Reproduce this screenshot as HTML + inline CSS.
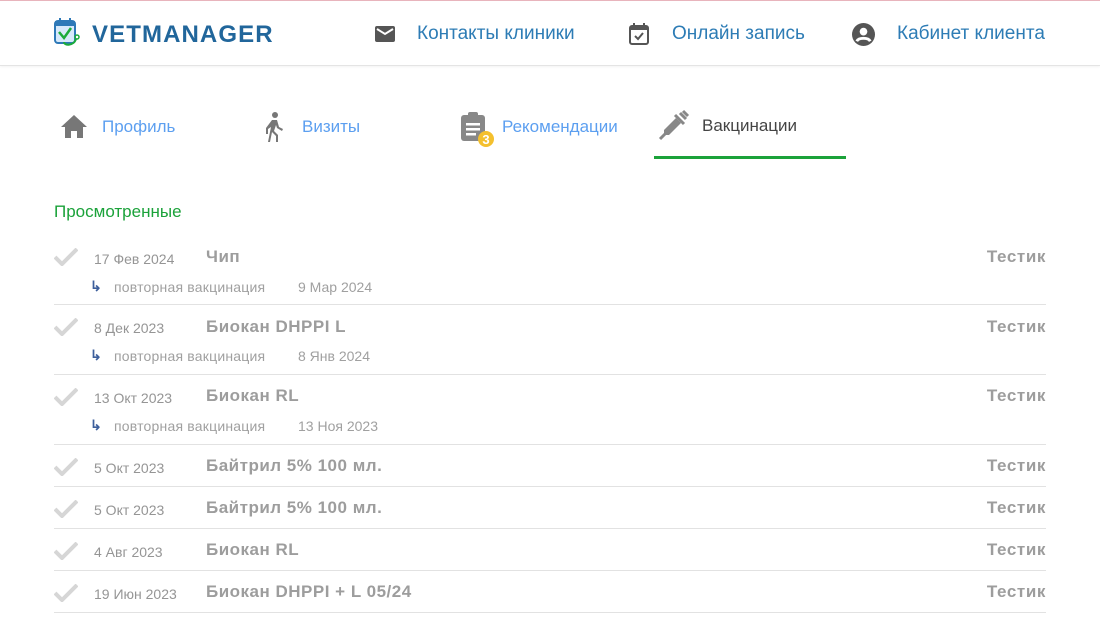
<!DOCTYPE html>
<html><head><meta charset="utf-8"><style>
*{margin:0;padding:0;box-sizing:border-box}
body{width:1100px;height:618px;overflow:hidden;background:#fff;font-family:"Liberation Sans",sans-serif;position:relative}
.top{position:absolute;left:0;top:0;width:1100px;height:1px;background:#e8b4bc}
.hdr{position:absolute;left:0;top:1px;width:1100px;height:65px;border-bottom:1px solid #e4e4e4;box-shadow:0 1px 2px rgba(0,0,0,.05)}
.logo{position:absolute;left:92px;top:20px;font-size:24px;font-weight:bold;color:#21669b;letter-spacing:1.1px}
.hl{position:absolute;top:22px;font-size:19px;color:#2d7cb5}
.tab{position:absolute;top:117px;font-size:17px;color:#5c9ff0}
.sec{position:absolute;left:54px;top:202px;font-size:17px;color:#1ba23a}
.row{position:absolute;left:54px;width:992px;border-bottom:1px solid #e2e2e2}
.chk{position:absolute;left:0;top:13px}
.d{position:absolute;left:40px;font-size:14px;color:#959595}
.t{position:absolute;left:152px;font-size:17px;font-weight:bold;color:#9d9d9d;letter-spacing:0.5px}
.o{position:absolute;right:0;font-size:17px;font-weight:bold;color:#9d9d9d;letter-spacing:0.6px}
.s{position:absolute;left:60px;font-size:14px;color:#a0a0a0;letter-spacing:0.2px}
.s2{position:absolute;left:244px;font-size:14px;color:#a0a0a0}
.ar{position:absolute;left:36px;font-size:14px;color:#3d5f9c;font-weight:bold}
</style></head><body>
<div class="top"></div>
<div class="hdr">
<svg style="position:absolute;left:53px;top:15px" width="34" height="34" viewBox="0 0 34 34"><rect x="2" y="5" width="20" height="22" rx="3" fill="#d7e9fb" stroke="#2e79b8" stroke-width="2"/><rect x="2" y="5" width="20" height="5" fill="#2e79b8"/><rect x="6" y="2" width="2" height="5" fill="#2e79b8"/><rect x="16" y="2" width="2" height="5" fill="#2e79b8"/><path d="M6 16l5 6 7-10" stroke="#1bab3b" stroke-width="2.5" fill="none"/><path d="M11 26c0 4 10 4 12-3" stroke="#1bab3b" stroke-width="2" fill="none"/><circle cx="24" cy="21" r="2" fill="none" stroke="#1bab3b" stroke-width="1.5"/></svg>
<div class="logo">VETMANAGER</div>
<svg style="position:absolute;left:375px;top:25px" width="20" height="16" viewBox="0 0 20 16"><rect width="20" height="16" rx="2" fill="#555"/><path d="M2 3l8 5 8-5" stroke="#fff" stroke-width="2" fill="none"/></svg>
<div class="hl" style="left:417px">Контакты клиники</div>
<svg style="position:absolute;left:629px;top:22px" width="20" height="22" viewBox="0 0 20 22"><rect x="1" y="3" width="18" height="18" rx="2" fill="none" stroke="#555" stroke-width="2"/><rect x="1" y="3" width="18" height="4" fill="#555"/><rect x="4" y="0" width="2" height="4" fill="#555"/><rect x="14" y="0" width="2" height="4" fill="#555"/><path d="M6 13l3 3 5-6" stroke="#555" stroke-width="2" fill="none"/></svg>
<div class="hl" style="left:672px">Онлайн запись</div>
<svg style="position:absolute;left:852px;top:22px" width="23" height="23" viewBox="0 0 24 24"><circle cx="12" cy="12" r="12" fill="#555"/><circle cx="12" cy="9" r="4" fill="#fff"/><path d="M5 19c2-4 12-4 14 0" stroke="#fff" stroke-width="3" fill="none"/></svg>
<div class="hl" style="left:897px">Кабинет клиента</div>
</div>
<svg style="position:absolute;left:61px;top:115px" width="26" height="23" viewBox="0 0 26 23"><path d="M13 0L0 12h4v11h6v-7h6v7h6V12h4z" fill="#777"/></svg>
<div class="tab" style="left:102px">Профиль</div>
<svg style="position:absolute;left:263px;top:112px" width="22" height="30" viewBox="0 0 22 30"><circle cx="12" cy="3" r="3" fill="#777"/><path d="M9 8h5l2 7 4 2-1 2-5-3-1-3-2 6 4 4v7h-2v-6l-4-4-2 10H5l3-15-3 2v5H3v-6z" fill="#777"/></svg>
<div class="tab" style="left:302px">Визиты</div>
<svg style="position:absolute;left:460px;top:112px" width="34" height="36" viewBox="0 0 34 36"><rect x="1" y="3" width="24" height="26" rx="3" fill="#888"/><rect x="8" y="0" width="10" height="6" rx="2" fill="#888"/><rect x="6" y="11" width="14" height="2.5" fill="#fff"/><rect x="6" y="16" width="14" height="2.5" fill="#fff"/><rect x="6" y="21" width="10" height="2.5" fill="#fff"/><circle cx="26" cy="27" r="8" fill="#f4c02e"/><text x="26" y="32" font-size="13" font-weight="bold" fill="#fff" text-anchor="middle" font-family="Liberation Sans">3</text></svg>
<div class="tab" style="left:502px">Рекомендации</div>
<svg style="position:absolute;left:658px;top:109px" width="32" height="32" viewBox="0 0 32 32"><path d="M2 30l5-5" stroke="#888" stroke-width="3"/><path d="M6 21l12-12 5 5-12 12-5 0z" fill="#888"/><path d="M17 6l9 9M22 4l6 6M25 2l5 5" stroke="#888" stroke-width="3"/></svg>
<div class="tab" style="left:702px;top:116px;color:#444">Вакцинации</div>
<div style="position:absolute;left:654px;top:156px;width:192px;height:3px;background:#1ba23a"></div>
<div class="sec">Просмотренные</div>

<svg width="0" height="0" style="position:absolute"><defs><symbol id="c" viewBox="0 0 24 18"><path d="M1 9l7 7L23 1" stroke="#d6d6d6" stroke-width="4" fill="none"/></symbol></defs></svg>

<div class="row" style="top:235px;height:70px"><svg class="chk" width="24" height="18"><use href="#c"/></svg><div class="d" style="top:16px">17 Фев 2024</div><div class="t" style="top:12px">Чип</div><div class="o" style="top:12px">Тестик</div><div class="ar" style="top:43px">↳</div><div class="s" style="top:44px">повторная вакцинация</div><div class="s2" style="top:44px">9 Мар 2024</div></div>
<div class="row" style="top:305px;height:70px"><svg class="chk" width="24" height="18"><use href="#c"/></svg><div class="d" style="top:15px">8 Дек 2023</div><div class="t" style="top:12px">Биокан DHPPI L</div><div class="o" style="top:12px">Тестик</div><div class="ar" style="top:42px">↳</div><div class="s" style="top:43px">повторная вакцинация</div><div class="s2" style="top:43px">8 Янв 2024</div></div>
<div class="row" style="top:375px;height:70px"><svg class="chk" width="24" height="18"><use href="#c"/></svg><div class="d" style="top:15px">13 Окт 2023</div><div class="t" style="top:11px">Биокан RL</div><div class="o" style="top:11px">Тестик</div><div class="ar" style="top:42px">↳</div><div class="s" style="top:43px">повторная вакцинация</div><div class="s2" style="top:43px">13 Ноя 2023</div></div>
<div class="row" style="top:445px;height:42px"><svg class="chk" width="24" height="18"><use href="#c"/></svg><div class="d" style="top:15px">5 Окт 2023</div><div class="t" style="top:11px">Байтрил 5% 100 мл.</div><div class="o" style="top:11px">Тестик</div></div>
<div class="row" style="top:487px;height:42px"><svg class="chk" width="24" height="18"><use href="#c"/></svg><div class="d" style="top:15px">5 Окт 2023</div><div class="t" style="top:11px">Байтрил 5% 100 мл.</div><div class="o" style="top:11px">Тестик</div></div>
<div class="row" style="top:529px;height:42px"><svg class="chk" width="24" height="18"><use href="#c"/></svg><div class="d" style="top:15px">4 Авг 2023</div><div class="t" style="top:11px">Биокан RL</div><div class="o" style="top:11px">Тестик</div></div>
<div class="row" style="top:571px;height:42px"><svg class="chk" width="24" height="18"><use href="#c"/></svg><div class="d" style="top:15px">19 Июн 2023</div><div class="t" style="top:11px">Биокан DHPPI + L 05/24</div><div class="o" style="top:11px">Тестик</div></div>
</body></html>
